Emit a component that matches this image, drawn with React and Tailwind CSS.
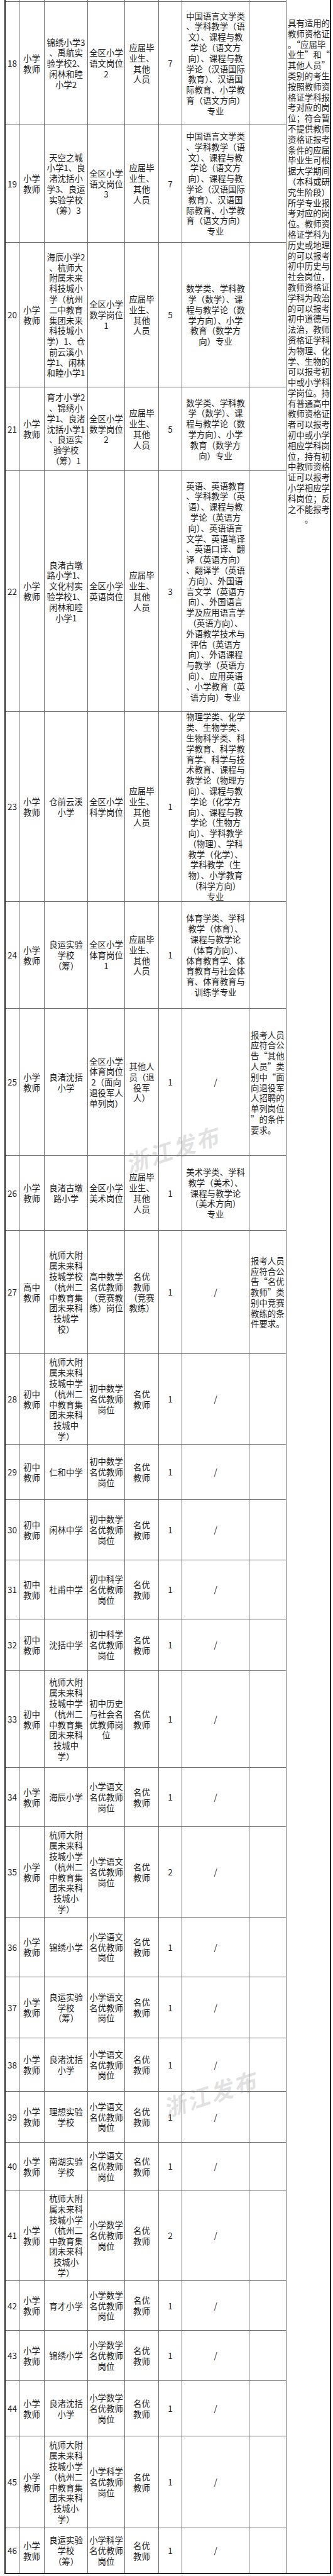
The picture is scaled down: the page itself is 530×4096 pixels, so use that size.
import clsx from 'clsx'

const XX = ['小学', '教师']
const CZ = ['初中', '教师']
const GZ = ['高中', '教师']
const YJ = ['应届毕', '业生、', '其他', '人员']
const MY = ['名优', '教师']

const LONG_MID = ['杭师大附', '属未来科', '技城中学', '（杭州二', '中教育集', '团未来科', '技城中', '学）']
const LONG_PRI = ['杭师大附', '属未来科', '技城小学', '（杭州二', '中教育集', '团未来科', '技城小', '学）']

const YW = ['中国语言文学类', '、学科教学（语', '文）、课程与教', '学论（语文方', '向）、课程与教', '学论（汉语国际', '教育）、汉语国', '际教育、小学教', '育（语文方向）', '专业']
const SX = ['数学类、学科教', '学（数学）、课', '程与教学论（数', '学方向）、小学', '教育（数学方', '向）专业']

const REMARK = [
  '具有适用的', '教师资格证', '。“应届毕', '业生”和“', '其他人员”', '类别的考生', '按照教师资', '格证学科报',
  '考对应的岗', '位；符合暂', '不提供教师', '资格证报考', '条件的应届', '毕业生可根', '据大学期间', '（本科或研',
  '究生阶段）', '所学专业报', '考对应的岗', '位。教师资', '格证学科为', '历史或地理', '的可以报考', '初中历史与',
  '社会岗位，', '教师资格证', '学科为政治', '的可以报考', '初中道德与', '法治，教师', '资格证学科', '为物理、化',
  '学、生物的', '可以报考初', '中或小学科', '学岗位。持', '有普通高中', '教师资格证', '者可以报考', '初中或小学',
  '相应学科岗', '位，持有初', '中教师资格', '证可以报考', '小学相应学', '科岗位；反', '之不能报考',
]

const rows = [
  { n: '18', h: 'h-[196px]', t: XX, s: ['锦绣小学3', '、禹航实', '验学校2、', '闲林和睦', '小学2'], p: ['全区小学', '语文岗位', '2'], c: YJ, k: '7', m: YW },
  { n: '19', h: 'h-[187px]', t: XX, s: ['天空之城', '小学1、良', '渚沈括小', '学3、良运', '实验学校', '（筹）3'], p: ['全区小学', '语文岗位', '3'], c: YJ, k: '7', m: YW },
  { n: '20', h: 'h-[230px]', t: XX, s: ['海辰小学2', '、杭师大', '附属未来', '科技城小', '学（杭州', '二中教育', '集团未来', '科技城小', '学）1、仓', '前云溪小', '学1、闲林', '和睦小学1'], p: ['全区小学', '数学岗位', '1'], c: YJ, k: '5', m: SX },
  { n: '21', h: 'h-[133px]', t: XX, s: ['育才小学2', '、锦绣小', '学1、良渚', '沈括小学1', '、良运实', '验学校', '（筹）1'], p: ['全区小学', '数学岗位', '2'], c: YJ, k: '5', m: SX },
  {
    n: '22', h: 'h-[383px]', t: XX, s: ['良渚古墩', '路小学1、', '文化村实', '验学校1、', '闲林和睦', '小学1'], p: ['全区小学', '英语岗位'], c: YJ, k: '3',
    m: ['英语、英语教育', '、学科教学（英', '语）、课程与教', '学论（英语方', '向）、英语语言', '文学、英语笔译', '、英语口译、翻', '译（英语方向）', '、翻译学（英语', '方向）、外国语', '言文学（英语方', '向）、外国语言', '学及应用语言学', '（英语方向）、', '外语教学技术与', '评估（英语方', '向）、外语课程', '与教学（英语方', '向）、应用英语', '、小学教育（英', '语方向）专业'],
  },
  {
    n: '23', h: 'h-[302px]', t: XX, s: ['仓前云溪', '小学'], p: ['全区小学', '科学岗位'], c: YJ, k: '1',
    m: ['物理学类、化学', '类、生物学类、', '生物科学类、科', '学教育、科学教', '育学、科学与技', '术教育、课程与', '教学论（物理方', '向）、课程与教', '学论（化学方', '向）、课程与教', '学论（生物方', '向）、学科教学', '（物理）、学科', '教学（化学）、', '学科教学（生', '物）、小学教育', '（科学方向）', '专业'],
  },
  {
    n: '24', h: 'h-[170px]', t: XX, s: ['良运实验', '学校', '（筹）'], p: ['全区小学', '体育岗位', '1'], c: YJ, k: '1',
    m: ['体育学类、学科', '教学（体育）、', '课程与教学论', '（体育方向）、', '体育教育学、体', '育教育与社会体', '育、体育教育与', '训练学专业'],
  },
  {
    n: '25', h: 'h-[234px]', t: XX, s: ['良渚沈括', '小学'], p: ['全区小学', '体育岗位', '2（面向', '退役军人', '单列岗）'], c: ['其他人', '员（退', '役军', '人）'], k: '1', m: ['/'],
    r: ['报考人员', '应符合公', '告“其他', '人员”类', '别中“面', '向退役军', '人招聘的', '单列岗位', '”的条件', '要求。'],
  },
  { n: '26', h: 'h-[119px]', t: XX, s: ['良渚古墩', '路小学'], p: ['全区小学', '美术岗位'], c: YJ, k: '1', m: ['美术学类、学科', '教学（美术）、', '课程与教学论', '（美术方向）', '专业'] },
  {
    n: '27', h: 'h-[196px]', t: GZ, s: ['杭师大附', '属未来科', '技城学校', '（杭州二', '中教育集', '团未来科', '技城学', '校）'], p: ['高中数学', '名优教师', '（竞赛教', '练）岗位'], c: ['名优', '教师', '（竞赛', '教练）'], k: '1', m: ['/'],
    r: ['报考人员', '应符合公', '告“名优', '教师”类', '别中竞赛', '教练的条', '件要求。'],
  },
  { n: '28', h: 'h-[144px]', t: CZ, s: LONG_MID, p: ['初中数学', '名优教师', '岗位'], c: MY, k: '1', m: ['/'] },
  { n: '29', h: 'h-[88px]', t: CZ, s: ['仁和中学'], p: ['初中数学', '名优教师', '岗位'], c: MY, k: '1', m: ['/'] },
  { n: '30', h: 'h-[96px]', t: CZ, s: ['闲林中学'], p: ['初中数学', '名优教师', '岗位'], c: MY, k: '1', m: ['/'] },
  { n: '31', h: 'h-[94px]', t: CZ, s: ['杜甫中学'], p: ['初中科学', '名优教师', '岗位'], c: MY, k: '1', m: ['/'] },
  { n: '32', h: 'h-[82px]', t: CZ, s: ['沈括中学'], p: ['初中科学', '名优教师', '岗位'], c: MY, k: '1', m: ['/'] },
  { n: '33', h: 'h-[154px]', t: CZ, s: LONG_MID, p: ['初中历史', '与社会名', '优教师岗', '位'], c: MY, k: '1', m: ['/'] },
  { n: '34', h: 'h-[94px]', t: XX, s: ['海辰小学'], p: ['小学语文', '名优教师', '岗位'], c: MY, k: '1', m: ['/'] },
  { n: '35', h: 'h-[144px]', t: XX, s: LONG_PRI, p: ['小学语文', '名优教师', '岗位'], c: MY, k: '2', m: ['/'] },
  { n: '36', h: 'h-[95px]', t: XX, s: ['锦绣小学'], p: ['小学语文', '名优教师', '岗位'], c: MY, k: '1', m: ['/'] },
  { n: '37', h: 'h-[97px]', t: XX, s: ['良运实验', '学校', '（筹）'], p: ['小学语文', '名优教师', '岗位'], c: MY, k: '1', m: ['/'] },
  { n: '38', h: 'h-[85px]', t: XX, s: ['良渚沈括', '小学'], p: ['小学语文', '名优教师', '岗位'], c: MY, k: '1', m: ['/'] },
  { n: '39', h: 'h-[81px]', t: XX, s: ['理想实验', '学校'], p: ['小学语文', '名优教师', '岗位'], c: MY, k: '1', m: ['/'] },
  { n: '40', h: 'h-[76px]', t: XX, s: ['南湖实验', '学校'], p: ['小学语文', '名优教师', '岗位'], c: MY, k: '1', m: ['/'] },
  { n: '41', h: 'h-[144px]', t: XX, s: LONG_PRI, p: ['小学数学', '名优教师', '岗位'], c: MY, k: '2', m: ['/'] },
  { n: '42', h: 'h-[79px]', t: XX, s: ['育才小学'], p: ['小学数学', '名优教师', '岗位'], c: MY, k: '1', m: ['/'] },
  { n: '43', h: 'h-[80px]', t: XX, s: ['锦绣小学'], p: ['小学数学', '名优教师', '岗位'], c: MY, k: '1', m: ['/'] },
  { n: '44', h: 'h-[88px]', t: XX, s: ['良渚沈括', '小学'], p: ['小学数学', '名优教师', '岗位'], c: MY, k: '1', m: ['/'] },
  { n: '45', h: 'h-[146px]', t: XX, s: LONG_PRI, p: ['小学科学', '名优教师', '岗位'], c: MY, k: '1', m: ['/'] },
  { n: '46', h: 'h-[71px]', t: XX, s: ['良运实验', '学校', '（筹）'], p: ['小学科学', '名优教师', '岗位'], c: MY, k: '1', m: ['/'] },
]

function Cell({ w, lines = [], left, last }) {
  return (
    <div
      className={clsx(
        'flex flex-col justify-center shrink-0',
        left ? 'items-start text-left pl-[2px]' : 'items-center text-center',
        !last && 'border-r border-[#6b6b6b]',
        w
      )}
    >
      {lines.map((l, i) => (
        <div key={i} className="whitespace-nowrap">
          {l}
        </div>
      ))}
    </div>
  )
}

function Row({ r, last }) {
  return (
    <div className={clsx('flex', !last && 'border-b border-[#6b6b6b]', r.h)}>
      <Cell w="w-[22px]" lines={[r.n]} />
      <Cell w="w-[40px]" lines={r.t} />
      <Cell w="w-[69px]" lines={r.s} />
      <Cell w="w-[59px]" lines={r.p} />
      <Cell w="w-[54px]" lines={r.c} />
      <Cell w="w-[37px]" lines={[r.k]} />
      <Cell w="w-[107px]" lines={r.m} />
      <Cell w="w-[58px]" lines={r.r} left last />
    </div>
  )
}

export default function App() {
  return (
    <div
      lang="zh-CN"
      className="relative w-[530px] bg-white pb-[4px] text-[13.4px] leading-[16.8px] text-[#1c1c1c] font-['Noto_Sans_CJK_SC','Liberation_Sans',sans-serif]"
    >
      <div className="ml-[7px] w-[520px] flex border-l-2 border-r-2 border-b-2 border-[#262626]">
        <div className="w-[447px] flex flex-col border-r border-[#6b6b6b]">
          {/* sliver of the row above */}
          <div className="h-[3px] flex border-b border-[#6b6b6b]">
            <Cell w="w-[22px]" />
            <Cell w="w-[40px]" />
            <Cell w="w-[69px]" />
            <Cell w="w-[59px]" />
            <Cell w="w-[54px]" />
            <Cell w="w-[37px]" />
            <Cell w="w-[107px]" />
            <Cell w="w-[58px]" last />
          </div>
          {rows.map((r, i) => (
            <Row key={r.n} r={r} last={i === rows.length - 1} />
          ))}
        </div>
        <div className="flex-1 pt-[28px] pl-[2px]">
          {REMARK.map((l, i) => (
            <div key={i} className="whitespace-nowrap">
              {l}
            </div>
          ))}
          <div className="text-center">。</div>
        </div>
      </div>

      {/* watermarks */}
      <div className="absolute left-[196px] top-[1804px] rotate-[-18deg] text-[36px] leading-[44px] font-bold italic tracking-[3px] text-[#8a8a8a]/25 pointer-events-none whitespace-nowrap">
        浙江发布
      </div>
      <div className="absolute left-[256px] top-[3306px] rotate-[-18deg] text-[36px] leading-[44px] font-bold italic tracking-[3px] text-[#8a8a8a]/25 pointer-events-none whitespace-nowrap">
        浙江发布
      </div>
    </div>
  )
}
